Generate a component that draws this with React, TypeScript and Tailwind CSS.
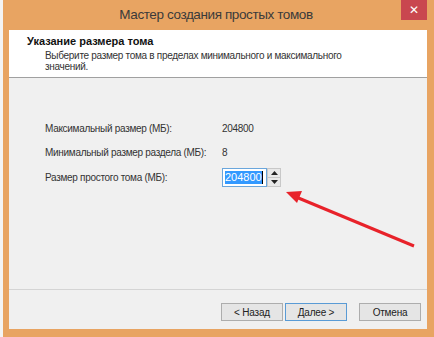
const Row = ({ label, children }: { label: string; children: React.ReactNode }) => (
  <div className="flex items-center h-[24.5px]">
    <span className="w-[177px] whitespace-nowrap">{label}</span>
    {children}
  </div>
);

const Button = ({ label, active = false }: { label: string; active?: boolean }) => (
  <button
    className={`h-[18px] w-[62px] text-[10px] tracking-[-0.2px] text-[#222] bg-[#e5e5e5] border ${
      active ? "border-[#5a9bd5]" : "border-[#adadad]"
    }`}
  >
    {label}
  </button>
);

export default function App() {
  return (
    <div
      className="relative flex w-[434px] h-[337px] bg-[#e8e8e8] overflow-hidden"
      style={{ fontFamily: '"Liberation Sans", Arial, sans-serif' }}
    >
      <div className="w-[3px] h-full bg-[#f4f4f4]" />
      <div className="flex-1 flex flex-col bg-[#e8a462] pl-[6px] pr-[7px] pb-[8px]">
        <header className="relative h-[30px] flex items-center justify-center">
          <span className="text-[13.5px] tracking-[-0.4px] text-[#3a3a3a] pr-[4px]">
            Мастер создания простых томов
          </span>
          <button className="absolute right-0 top-0 w-[26px] h-[20px] bg-[#c9474f] text-white text-[12px] leading-none flex items-center justify-center">
            ✕
          </button>
        </header>
        <main className="flex-1 flex flex-col bg-[#f0f0f0]">
          <section className="h-[48px] bg-white border-b border-[#a0a0a0] pl-[18px] pt-[4px]">
            <h1 className="text-[11px] font-bold text-[#111] leading-[14px]">Указание размера тома</h1>
            <p className="mt-[2px] pl-[18px] text-[10px] tracking-[-0.3px] text-[#333] leading-[11px] w-[320px]">
              Выберите размер тома в пределах минимального и максимального значений.
            </p>
          </section>
          <section className="flex-1 pl-[36px] pt-[38px] text-[10px] tracking-[-0.3px] text-[#333]">
            <Row label="Максимальный размер (МБ):">
              <span>204800</span>
            </Row>
            <Row label="Минимальный размер раздела (МБ):">
              <span>8</span>
            </Row>
            <Row label="Размер простого тома (МБ):">
              <div className="flex">
                <div className="w-[45px] h-[19px] bg-white border border-[#6aa6dc] flex items-center pl-[2px]">
                  <span className="bg-[#3399ff] text-white text-[11px] tracking-normal leading-[13px]">204800</span>
                  <span className="w-px h-[13px] bg-black" />
                </div>
                <div className="flex flex-col w-[14px] h-[19px] border border-[#c8c8c8] bg-[#f0f0f0]">
                  <div className="flex-1 flex items-center justify-center border-b border-[#c8c8c8] bg-[#e8e8e8]">
                    <svg width="7" height="4" viewBox="0 0 7 4"><path d="M0 4 L3.5 0 L7 4 Z" fill="#222" /></svg>
                  </div>
                  <div className="flex-1 flex items-center justify-center bg-[#e8e8e8]">
                    <svg width="7" height="4" viewBox="0 0 7 4"><path d="M0 0 L3.5 4 L7 0 Z" fill="#222" /></svg>
                  </div>
                </div>
              </div>
            </Row>
          </section>
          <div className="h-[2px] border-t border-[#d4d4d4]" />
          <footer className="h-[38px] flex items-center justify-end gap-[2px] pr-[6px] pt-[4px]">
            <Button label="< Назад" />
            <Button label="Далее >" active />
            <div className="w-[8px]" />
            <Button label="Отмена" />
          </footer>
        </main>
      </div>
      <svg className="absolute left-0 top-0" width="434" height="337" viewBox="0 0 434 337">
        <line x1="414" y1="246" x2="296" y2="197" stroke="#e8222a" strokeWidth="3" />
        <path d="M286 192 L302 191 L297 203 Z" fill="#e8222a" />
      </svg>
    </div>
  );
}
